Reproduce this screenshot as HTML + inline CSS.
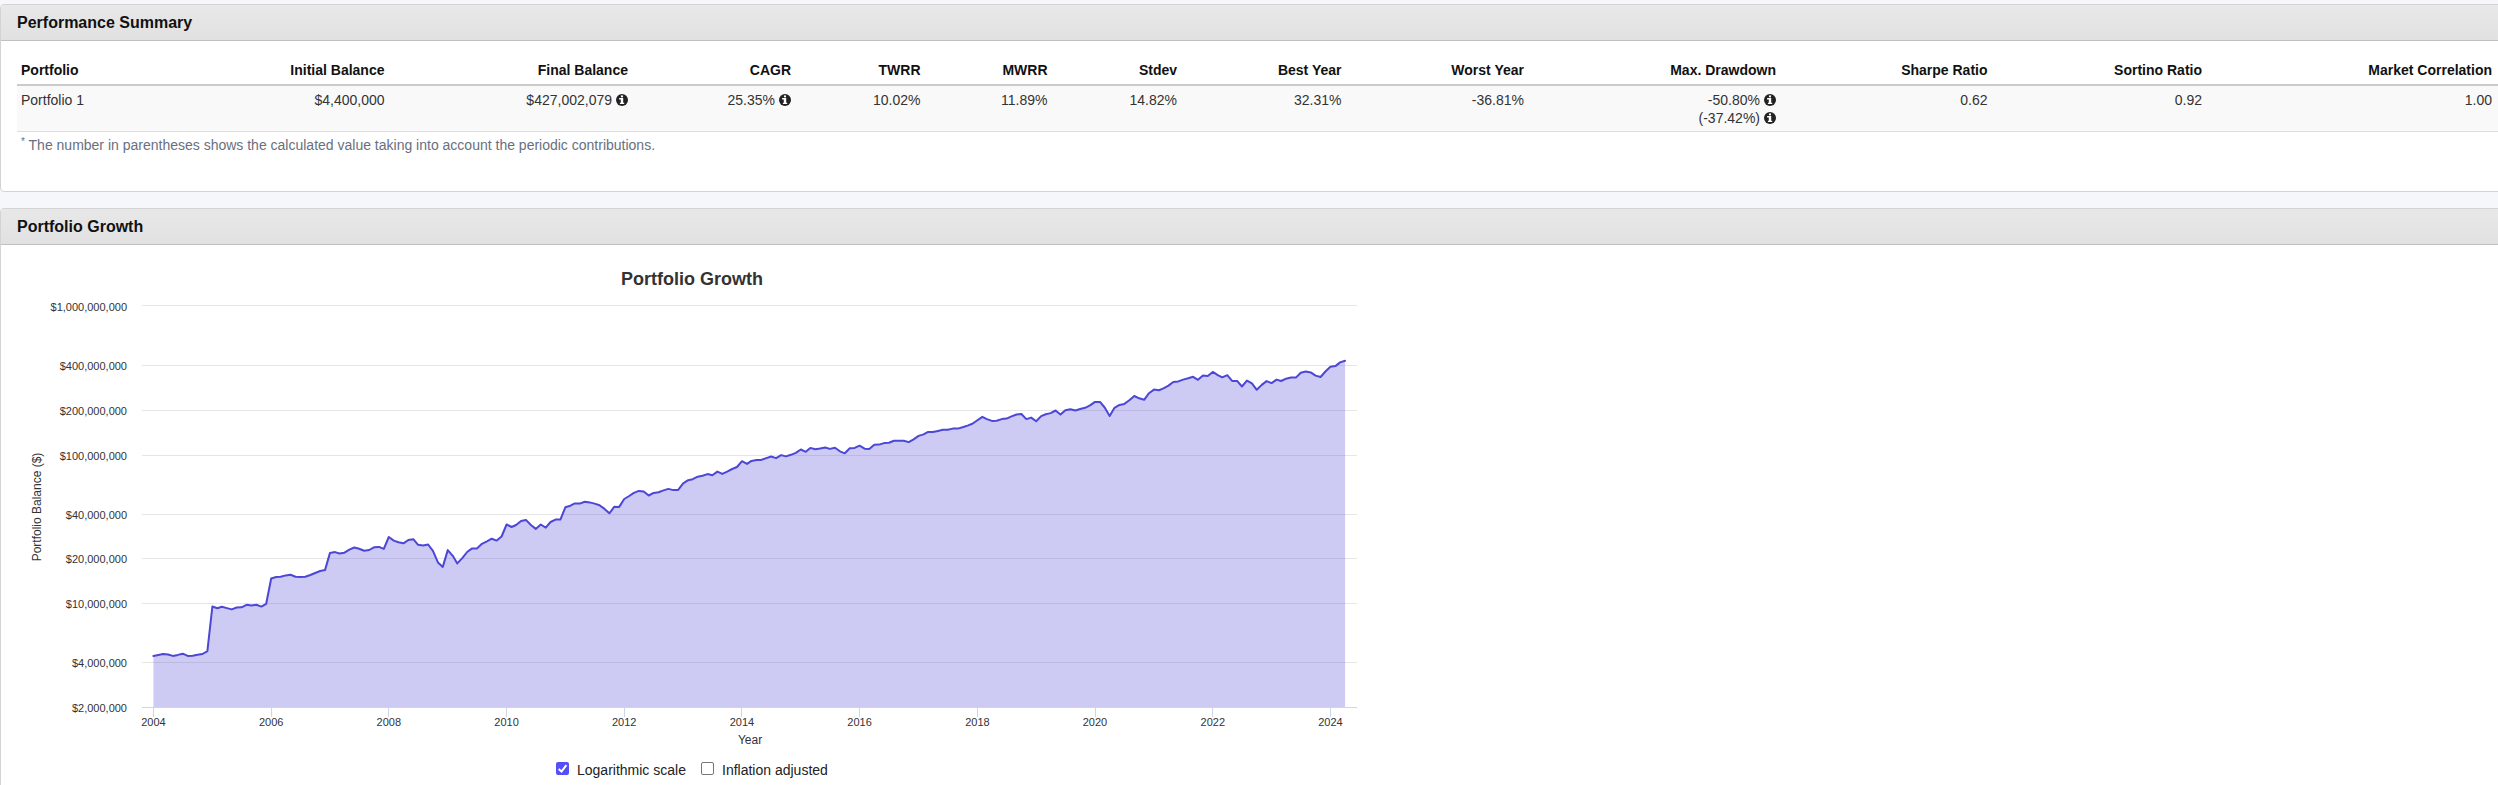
<!DOCTYPE html>
<html><head><meta charset="utf-8">
<style>
html,body{margin:0;padding:0;}
body{width:2498px;height:785px;overflow:hidden;background:#f5f7fa;font-family:"Liberation Sans",sans-serif;color:#333;position:relative;}
.panel{position:absolute;left:0;width:2520px;background:#fff;border:1px solid #d3d3d3;border-radius:4px;box-sizing:border-box;}
.ph{position:absolute;left:0;top:0;right:0;height:35px;background:linear-gradient(#e8e8e8,#e1e1e1);border-bottom:1px solid #c0c0c0;border-radius:3px 3px 0 0;}
.ph span{position:absolute;left:16px;top:8px;font-size:16px;font-weight:bold;color:#111;line-height:20px;}
.abs{position:absolute;white-space:nowrap;}
.th{position:absolute;top:60px;font-size:14px;font-weight:bold;line-height:20px;color:#111;white-space:nowrap;}
.td{position:absolute;top:91px;font-size:14px;line-height:18px;color:#333;white-space:nowrap;}
.r{transform:translateX(-100%);}
.ic{display:inline-block;width:12px;height:12px;vertical-align:-1px;margin-left:4px;}
</style></head><body>
<div class="panel" style="top:4px;height:188px;">
  <div class="ph"><span>Performance Summary</span></div>
</div>
<div class="th" style="left:21px">Portfolio</div>
<div class="th" style="right:2113.5px">Initial Balance</div>
<div class="th" style="right:1870.0px">Final Balance</div>
<div class="th" style="right:1707.0px">CAGR</div>
<div class="th" style="right:1577.5px">TWRR</div>
<div class="th" style="right:1450.5px">MWRR</div>
<div class="th" style="right:1321.0px">Stdev</div>
<div class="th" style="right:1156.5px">Best Year</div>
<div class="th" style="right:974.0px">Worst Year</div>
<div class="th" style="right:722.0px">Max. Drawdown</div>
<div class="th" style="right:510.5px">Sharpe Ratio</div>
<div class="th" style="right:296.0px">Sortino Ratio</div>
<div class="th" style="right:6.0px">Market Correlation</div>
<div class="abs" style="left:17px;top:84px;width:2481px;height:2px;background:#cbcbcb"></div>
<div class="abs" style="left:17px;top:86px;width:2481px;height:45px;background:#f9f9f9"></div>
<div class="abs" style="left:17px;top:131px;width:2481px;height:1px;background:#dcdde0"></div>
<div class="td" style="left:21px">Portfolio 1</div>
<div class="td" style="right:2113.5px">$4,400,000</div>
<div class="td" style="right:1870.0px">$427,002,079<svg class="ic" viewBox="0 0 12 12"><circle cx="6" cy="6" r="6" fill="#222"/><circle cx="6" cy="2.4" r="1.15" fill="#fff"/><path d="M3.1 4.1H7.2V8.8H8.2V10H3.9V8.8H4.8V5.4H3.1Z" fill="#fff"/></svg></div>
<div class="td" style="right:1707.0px">25.35%<svg class="ic" viewBox="0 0 12 12"><circle cx="6" cy="6" r="6" fill="#222"/><circle cx="6" cy="2.4" r="1.15" fill="#fff"/><path d="M3.1 4.1H7.2V8.8H8.2V10H3.9V8.8H4.8V5.4H3.1Z" fill="#fff"/></svg></div>
<div class="td" style="right:1577.5px">10.02%</div>
<div class="td" style="right:1450.5px">11.89%</div>
<div class="td" style="right:1321.0px">14.82%</div>
<div class="td" style="right:1156.5px">32.31%</div>
<div class="td" style="right:974.0px">-36.81%</div>
<div class="td" style="right:722.0px">-50.80%<svg class="ic" viewBox="0 0 12 12"><circle cx="6" cy="6" r="6" fill="#222"/><circle cx="6" cy="2.4" r="1.15" fill="#fff"/><path d="M3.1 4.1H7.2V8.8H8.2V10H3.9V8.8H4.8V5.4H3.1Z" fill="#fff"/></svg></div>
<div class="td" style="right:510.5px">0.62</div>
<div class="td" style="right:296.0px">0.92</div>
<div class="td" style="right:6.0px">1.00</div>
<div class="td" style="top:109px;right:722.0px">(-37.42%)<svg class="ic" viewBox="0 0 12 12"><circle cx="6" cy="6" r="6" fill="#222"/><circle cx="6" cy="2.4" r="1.15" fill="#fff"/><path d="M3.1 4.1H7.2V8.8H8.2V10H3.9V8.8H4.8V5.4H3.1Z" fill="#fff"/></svg></div>
<div class="abs foot" style="left:21px;top:135px;font-size:14px;line-height:20px;color:#687080"><sup style="font-size:10px;vertical-align:0;position:relative;top:-5px">*</sup> The number in parentheses shows the calculated value taking into account the periodic contributions.</div>
<div class="panel" style="top:208px;height:600px;">
  <div class="ph"><span>Portfolio Growth</span></div>
</div>
<!--CHART-->
<svg class="abs" style="left:0;top:0" width="2498" height="785">
<g shape-rendering="crispEdges">
<rect x="142" y="305" width="1215" height="1" fill="#e6e6e6"/>
<rect x="142" y="365" width="1215" height="1" fill="#e6e6e6"/>
<rect x="142" y="410" width="1215" height="1" fill="#e6e6e6"/>
<rect x="142" y="455" width="1215" height="1" fill="#e6e6e6"/>
<rect x="142" y="514" width="1215" height="1" fill="#e6e6e6"/>
<rect x="142" y="558" width="1215" height="1" fill="#e6e6e6"/>
<rect x="142" y="603" width="1215" height="1" fill="#e6e6e6"/>
<rect x="142" y="662" width="1215" height="1" fill="#e6e6e6"/>
</g>
<path d="M153.40 656.00 L158.39 654.90 L163.07 653.90 L168.06 654.50 L172.90 655.90 L177.89 654.90 L182.72 653.70 L187.72 655.90 L192.71 655.70 L197.55 654.80 L202.54 654.00 L207.38 651.10 L212.37 606.50 L217.37 608.30 L221.88 606.80 L226.87 608.10 L231.71 609.40 L236.70 607.50 L241.53 607.30 L246.53 604.80 L251.52 605.60 L256.36 604.80 L261.35 606.60 L266.19 603.80 L271.18 578.50 L276.18 577.00 L280.69 576.80 L285.68 575.40 L290.52 574.80 L295.51 576.80 L300.34 577.00 L305.34 576.80 L310.33 575.00 L315.17 573.00 L320.16 571.00 L325.00 570.10 L329.99 552.90 L334.99 552.10 L339.50 553.50 L344.49 552.70 L349.32 549.60 L354.32 547.50 L359.15 548.70 L364.15 550.70 L369.14 550.00 L373.98 547.30 L378.97 546.90 L383.81 548.90 L388.80 537.00 L393.79 540.60 L398.47 542.30 L403.46 543.30 L408.30 540.00 L413.29 539.20 L418.12 544.80 L423.12 545.60 L428.11 544.50 L432.95 550.90 L437.94 562.40 L442.78 566.90 L447.77 550.10 L452.77 555.80 L457.28 563.40 L462.27 558.10 L467.11 552.00 L472.10 548.40 L476.93 548.40 L481.93 543.80 L486.92 541.30 L491.76 538.70 L496.75 540.60 L501.59 536.50 L506.58 524.50 L511.58 527.00 L516.09 525.00 L521.08 520.90 L525.92 519.90 L530.91 525.00 L535.74 528.90 L540.74 524.50 L545.73 527.60 L550.57 522.00 L555.56 519.60 L560.40 519.60 L565.39 507.20 L570.39 505.70 L574.90 503.40 L579.89 503.60 L584.72 501.80 L589.72 502.40 L594.55 503.60 L599.55 505.20 L604.54 508.90 L609.38 513.30 L614.37 506.70 L619.21 506.90 L624.20 499.00 L629.19 496.00 L633.87 492.90 L638.86 490.90 L643.70 491.40 L648.69 495.50 L653.52 492.90 L658.52 492.20 L663.51 490.40 L668.35 488.90 L673.34 490.10 L678.18 489.90 L683.17 483.30 L688.17 480.20 L692.68 479.20 L697.67 476.70 L702.51 475.70 L707.50 474.10 L712.33 475.20 L717.33 471.60 L722.32 473.90 L727.16 471.60 L732.15 469.00 L736.99 467.00 L741.98 461.20 L746.98 463.90 L751.49 460.90 L756.48 459.90 L761.32 459.90 L766.31 458.10 L771.14 456.50 L776.14 458.10 L781.13 455.10 L785.97 456.40 L790.96 454.80 L795.80 452.80 L800.79 449.50 L805.79 451.80 L810.30 447.90 L815.29 449.20 L820.12 448.50 L825.12 447.50 L829.95 448.90 L834.95 447.70 L839.94 451.30 L844.78 453.30 L849.77 448.20 L854.61 447.90 L859.60 445.70 L864.59 448.70 L869.27 448.90 L874.26 444.80 L879.10 444.60 L884.09 443.10 L888.92 442.80 L893.92 440.80 L898.91 440.80 L903.75 440.80 L908.74 442.10 L913.58 439.30 L918.57 435.90 L923.57 434.40 L928.08 431.90 L933.07 431.90 L937.91 430.90 L942.90 429.80 L947.73 429.80 L952.73 428.60 L957.72 428.60 L962.56 427.30 L967.55 425.60 L972.39 423.70 L977.38 420.20 L982.38 416.80 L986.89 419.10 L991.88 420.90 L996.72 420.70 L1001.71 419.10 L1006.54 418.60 L1011.54 416.40 L1016.53 414.50 L1021.37 414.00 L1026.36 419.10 L1031.20 417.60 L1036.19 421.20 L1041.19 416.10 L1045.70 414.30 L1050.69 413.10 L1055.52 410.50 L1060.52 414.60 L1065.35 410.20 L1070.35 409.20 L1075.34 410.50 L1080.18 409.00 L1085.17 407.80 L1090.01 405.40 L1095.00 401.90 L1099.99 401.90 L1104.67 407.50 L1109.66 415.90 L1114.50 407.80 L1119.49 404.90 L1124.32 403.90 L1129.32 400.30 L1134.31 396.00 L1139.15 398.30 L1144.14 399.80 L1148.98 393.20 L1153.97 389.60 L1158.97 390.20 L1163.48 388.40 L1168.47 385.60 L1173.31 382.00 L1178.30 381.40 L1183.13 379.60 L1188.13 378.30 L1193.12 376.80 L1197.96 379.80 L1202.95 375.60 L1207.79 376.10 L1212.78 371.90 L1217.78 375.20 L1222.29 377.30 L1227.28 375.20 L1232.12 380.90 L1237.11 380.90 L1241.94 386.50 L1246.94 380.60 L1251.93 383.40 L1256.77 389.80 L1261.76 384.90 L1266.60 381.10 L1271.59 383.10 L1276.59 379.60 L1281.10 381.00 L1286.09 378.70 L1290.92 377.60 L1295.92 377.60 L1300.75 372.70 L1305.75 371.50 L1310.74 372.40 L1315.58 375.60 L1320.57 377.00 L1325.41 371.50 L1330.40 366.80 L1335.39 366.10 L1340.07 362.40 L1345.06 360.70 L1345.06 707 L153.40 707 Z" fill="rgba(74,68,212,0.28)"/>
<path d="M153.40 656.00 L158.39 654.90 L163.07 653.90 L168.06 654.50 L172.90 655.90 L177.89 654.90 L182.72 653.70 L187.72 655.90 L192.71 655.70 L197.55 654.80 L202.54 654.00 L207.38 651.10 L212.37 606.50 L217.37 608.30 L221.88 606.80 L226.87 608.10 L231.71 609.40 L236.70 607.50 L241.53 607.30 L246.53 604.80 L251.52 605.60 L256.36 604.80 L261.35 606.60 L266.19 603.80 L271.18 578.50 L276.18 577.00 L280.69 576.80 L285.68 575.40 L290.52 574.80 L295.51 576.80 L300.34 577.00 L305.34 576.80 L310.33 575.00 L315.17 573.00 L320.16 571.00 L325.00 570.10 L329.99 552.90 L334.99 552.10 L339.50 553.50 L344.49 552.70 L349.32 549.60 L354.32 547.50 L359.15 548.70 L364.15 550.70 L369.14 550.00 L373.98 547.30 L378.97 546.90 L383.81 548.90 L388.80 537.00 L393.79 540.60 L398.47 542.30 L403.46 543.30 L408.30 540.00 L413.29 539.20 L418.12 544.80 L423.12 545.60 L428.11 544.50 L432.95 550.90 L437.94 562.40 L442.78 566.90 L447.77 550.10 L452.77 555.80 L457.28 563.40 L462.27 558.10 L467.11 552.00 L472.10 548.40 L476.93 548.40 L481.93 543.80 L486.92 541.30 L491.76 538.70 L496.75 540.60 L501.59 536.50 L506.58 524.50 L511.58 527.00 L516.09 525.00 L521.08 520.90 L525.92 519.90 L530.91 525.00 L535.74 528.90 L540.74 524.50 L545.73 527.60 L550.57 522.00 L555.56 519.60 L560.40 519.60 L565.39 507.20 L570.39 505.70 L574.90 503.40 L579.89 503.60 L584.72 501.80 L589.72 502.40 L594.55 503.60 L599.55 505.20 L604.54 508.90 L609.38 513.30 L614.37 506.70 L619.21 506.90 L624.20 499.00 L629.19 496.00 L633.87 492.90 L638.86 490.90 L643.70 491.40 L648.69 495.50 L653.52 492.90 L658.52 492.20 L663.51 490.40 L668.35 488.90 L673.34 490.10 L678.18 489.90 L683.17 483.30 L688.17 480.20 L692.68 479.20 L697.67 476.70 L702.51 475.70 L707.50 474.10 L712.33 475.20 L717.33 471.60 L722.32 473.90 L727.16 471.60 L732.15 469.00 L736.99 467.00 L741.98 461.20 L746.98 463.90 L751.49 460.90 L756.48 459.90 L761.32 459.90 L766.31 458.10 L771.14 456.50 L776.14 458.10 L781.13 455.10 L785.97 456.40 L790.96 454.80 L795.80 452.80 L800.79 449.50 L805.79 451.80 L810.30 447.90 L815.29 449.20 L820.12 448.50 L825.12 447.50 L829.95 448.90 L834.95 447.70 L839.94 451.30 L844.78 453.30 L849.77 448.20 L854.61 447.90 L859.60 445.70 L864.59 448.70 L869.27 448.90 L874.26 444.80 L879.10 444.60 L884.09 443.10 L888.92 442.80 L893.92 440.80 L898.91 440.80 L903.75 440.80 L908.74 442.10 L913.58 439.30 L918.57 435.90 L923.57 434.40 L928.08 431.90 L933.07 431.90 L937.91 430.90 L942.90 429.80 L947.73 429.80 L952.73 428.60 L957.72 428.60 L962.56 427.30 L967.55 425.60 L972.39 423.70 L977.38 420.20 L982.38 416.80 L986.89 419.10 L991.88 420.90 L996.72 420.70 L1001.71 419.10 L1006.54 418.60 L1011.54 416.40 L1016.53 414.50 L1021.37 414.00 L1026.36 419.10 L1031.20 417.60 L1036.19 421.20 L1041.19 416.10 L1045.70 414.30 L1050.69 413.10 L1055.52 410.50 L1060.52 414.60 L1065.35 410.20 L1070.35 409.20 L1075.34 410.50 L1080.18 409.00 L1085.17 407.80 L1090.01 405.40 L1095.00 401.90 L1099.99 401.90 L1104.67 407.50 L1109.66 415.90 L1114.50 407.80 L1119.49 404.90 L1124.32 403.90 L1129.32 400.30 L1134.31 396.00 L1139.15 398.30 L1144.14 399.80 L1148.98 393.20 L1153.97 389.60 L1158.97 390.20 L1163.48 388.40 L1168.47 385.60 L1173.31 382.00 L1178.30 381.40 L1183.13 379.60 L1188.13 378.30 L1193.12 376.80 L1197.96 379.80 L1202.95 375.60 L1207.79 376.10 L1212.78 371.90 L1217.78 375.20 L1222.29 377.30 L1227.28 375.20 L1232.12 380.90 L1237.11 380.90 L1241.94 386.50 L1246.94 380.60 L1251.93 383.40 L1256.77 389.80 L1261.76 384.90 L1266.60 381.10 L1271.59 383.10 L1276.59 379.60 L1281.10 381.00 L1286.09 378.70 L1290.92 377.60 L1295.92 377.60 L1300.75 372.70 L1305.75 371.50 L1310.74 372.40 L1315.58 375.60 L1320.57 377.00 L1325.41 371.50 L1330.40 366.80 L1335.39 366.10 L1340.07 362.40 L1345.06 360.70" fill="none" stroke="#4c47d6" stroke-width="2" stroke-linejoin="round" stroke-linecap="round"/>
<g shape-rendering="crispEdges">
<rect x="142" y="707" width="1215" height="1" fill="#ccd6eb"/>
<rect x="153" y="707" width="1" height="10" fill="#ccd6eb"/>
<rect x="271" y="707" width="1" height="10" fill="#ccd6eb"/>
<rect x="388" y="707" width="1" height="10" fill="#ccd6eb"/>
<rect x="506" y="707" width="1" height="10" fill="#ccd6eb"/>
<rect x="624" y="707" width="1" height="10" fill="#ccd6eb"/>
<rect x="741" y="707" width="1" height="10" fill="#ccd6eb"/>
<rect x="859" y="707" width="1" height="10" fill="#ccd6eb"/>
<rect x="977" y="707" width="1" height="10" fill="#ccd6eb"/>
<rect x="1095" y="707" width="1" height="10" fill="#ccd6eb"/>
<rect x="1212" y="707" width="1" height="10" fill="#ccd6eb"/>
<rect x="1330" y="707" width="1" height="10" fill="#ccd6eb"/>
</g>
<g font-family="Liberation Sans, sans-serif" font-size="11" fill="#333">
<text x="127" y="311" text-anchor="end">$1,000,000,000</text>
<text x="127" y="370" text-anchor="end">$400,000,000</text>
<text x="127" y="415" text-anchor="end">$200,000,000</text>
<text x="127" y="460" text-anchor="end">$100,000,000</text>
<text x="127" y="519" text-anchor="end">$40,000,000</text>
<text x="127" y="563" text-anchor="end">$20,000,000</text>
<text x="127" y="608" text-anchor="end">$10,000,000</text>
<text x="127" y="667" text-anchor="end">$4,000,000</text>
<text x="127" y="712" text-anchor="end">$2,000,000</text>
<text x="153.4" y="726" text-anchor="middle">2004</text>
<text x="271.2" y="726" text-anchor="middle">2006</text>
<text x="388.8" y="726" text-anchor="middle">2008</text>
<text x="506.6" y="726" text-anchor="middle">2010</text>
<text x="624.2" y="726" text-anchor="middle">2012</text>
<text x="742.0" y="726" text-anchor="middle">2014</text>
<text x="859.6" y="726" text-anchor="middle">2016</text>
<text x="977.4" y="726" text-anchor="middle">2018</text>
<text x="1095.0" y="726" text-anchor="middle">2020</text>
<text x="1212.8" y="726" text-anchor="middle">2022</text>
<text x="1330.4" y="726" text-anchor="middle">2024</text>
</g>
<text x="692" y="285" text-anchor="middle" font-family="Liberation Sans, sans-serif" font-size="18" font-weight="bold" fill="#333">Portfolio Growth</text>
<text x="750" y="744" text-anchor="middle" font-family="Liberation Sans, sans-serif" font-size="12" fill="#333">Year</text>
<text transform="translate(41 507) rotate(-90)" text-anchor="middle" font-family="Liberation Sans, sans-serif" font-size="12" fill="#333">Portfolio Balance ($)</text>
</svg>
<div class="abs" style="left:556px;top:762px;width:13px;height:13px;background:#5550f6;border-radius:2px;"><svg width="13" height="13" viewBox="0 0 13 13" style="position:absolute;left:0;top:0"><path d="M2.7 6.9 L5.5 9.5 L10.4 3.2" fill="none" stroke="#fff" stroke-width="2"/></svg></div>
<div class="abs" style="left:577px;top:760px;font-size:14px;line-height:20px;color:#222">Logarithmic scale</div>
<div class="abs" style="left:701px;top:762px;width:13px;height:13px;box-sizing:border-box;border:1px solid #767676;border-radius:2px;background:#fff"></div>
<div class="abs" style="left:722px;top:760px;font-size:14px;line-height:20px;color:#222">Inflation adjusted</div>
<!--/CHART-->
</body></html>
